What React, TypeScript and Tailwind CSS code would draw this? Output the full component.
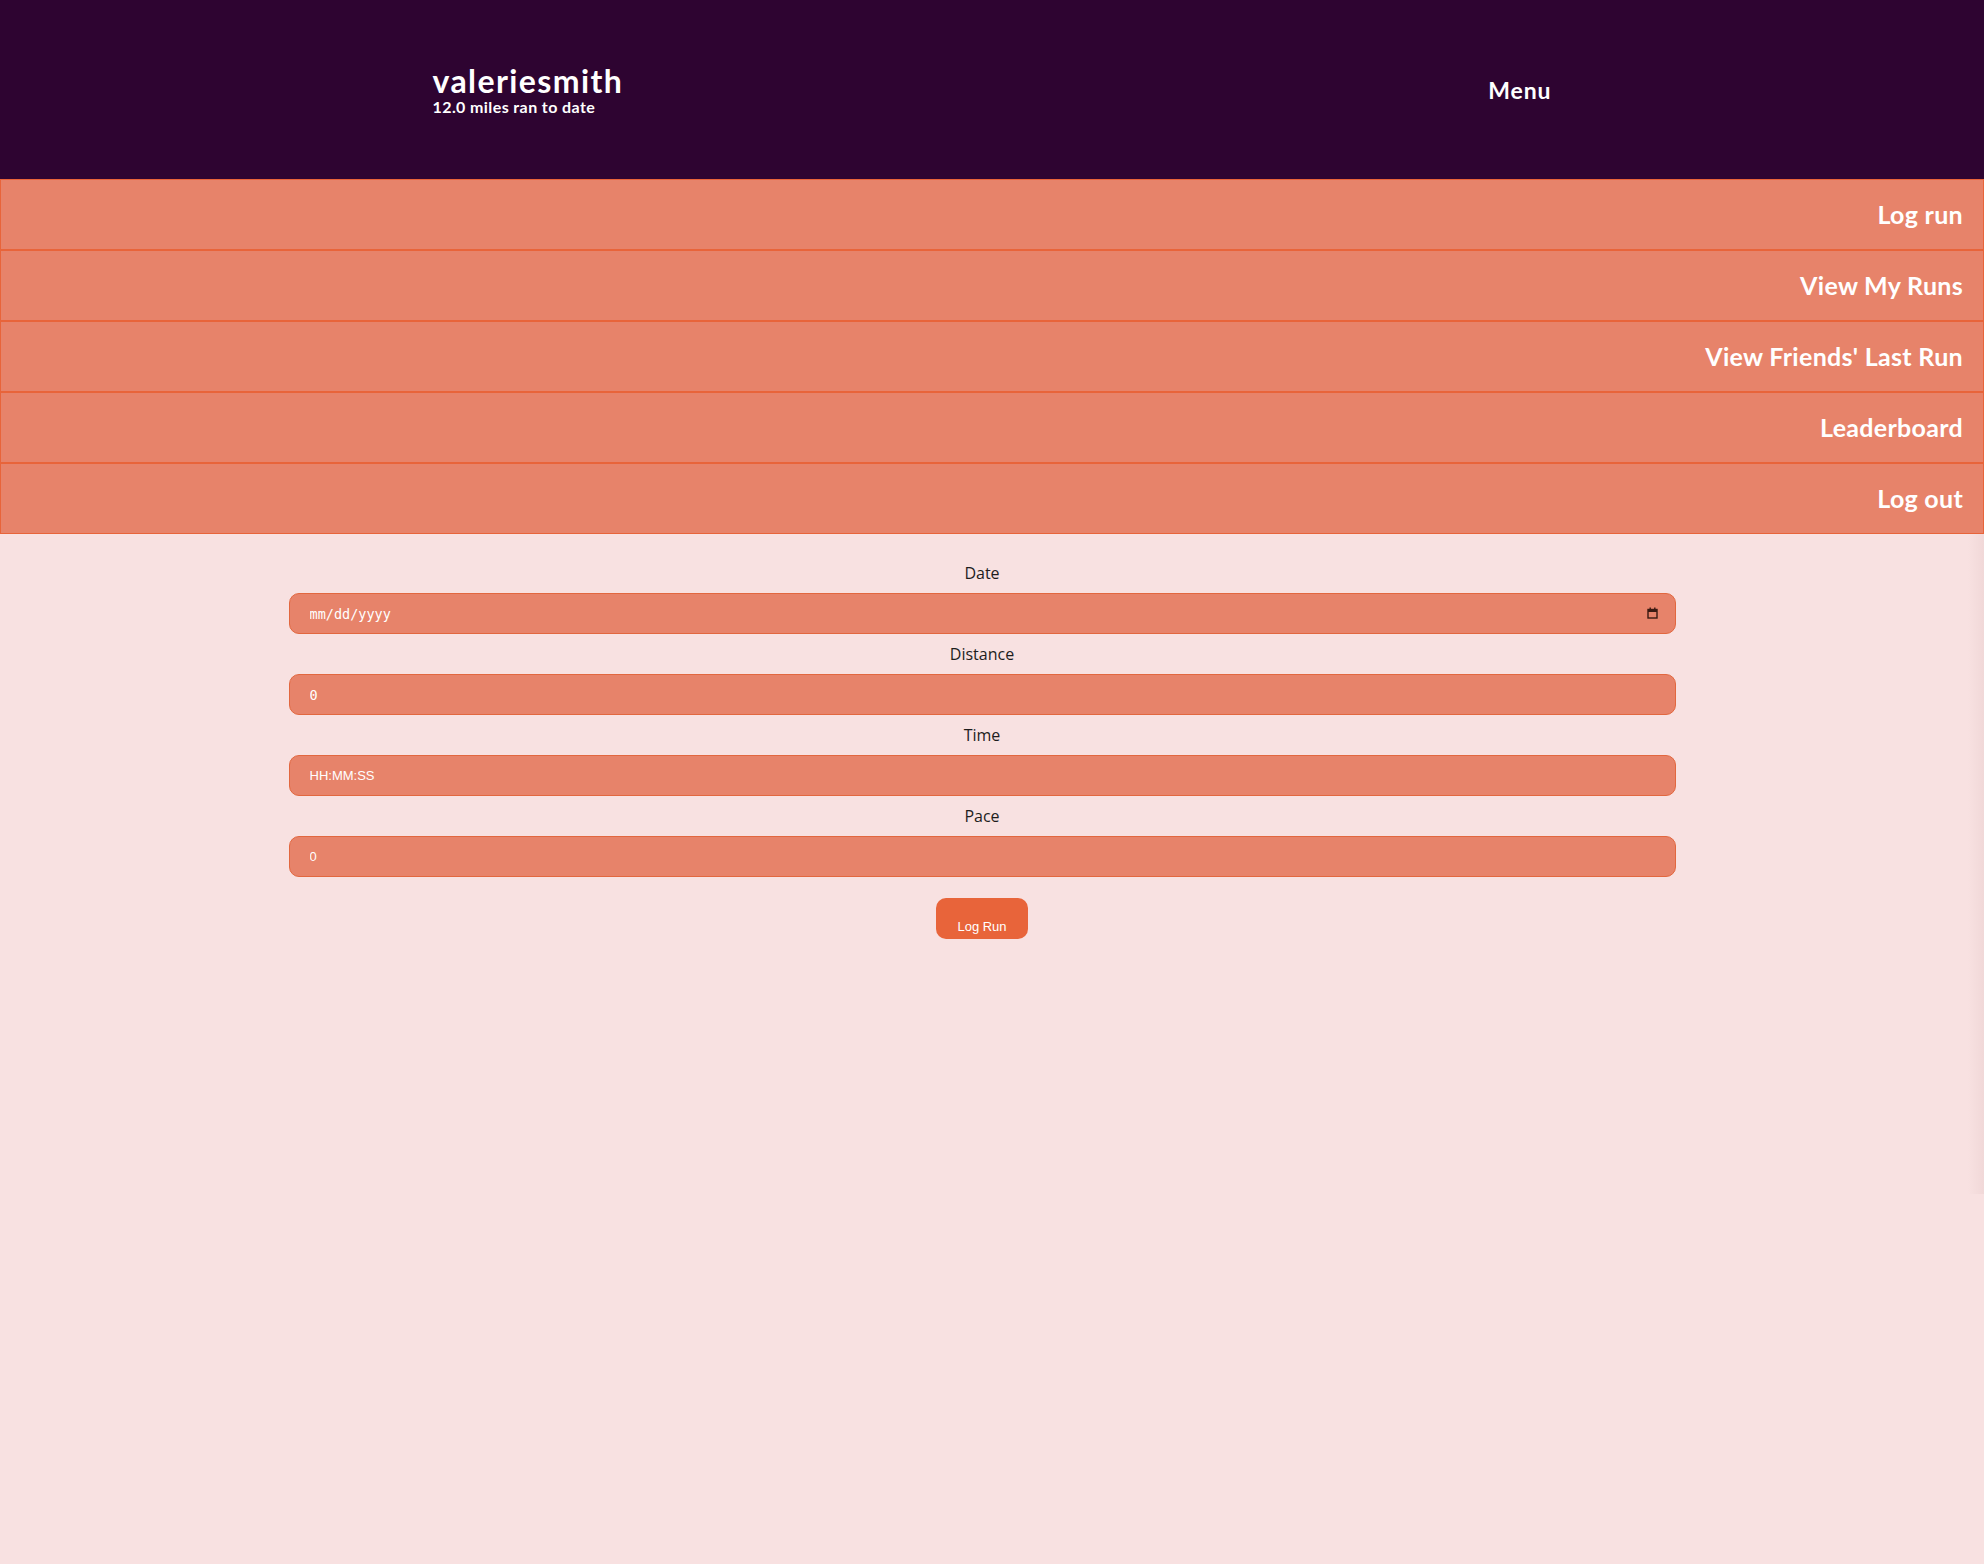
import React from "react";

const navItems = ["Log run", "View My Runs", "View Friends' Last Run", "Leaderboard", "Log out"];

function Field({ label, children }: { label: string; children: React.ReactNode }) {
  return (
    <div className="flex flex-col items-center">
      <div className="h-[20px] leading-[20px] text-[16px] text-[#1d1d1d] mt-[10px] mb-[10px]" style={{ fontFamily: '"Open Sans", "Liberation Sans", sans-serif' }}>
        {label}
      </div>
      {children}
    </div>
  );
}

const inputCls =
  "w-[1387px] h-[41px] rounded-[10px] border border-[#e2673f] bg-[#e7836a] pl-[20px] text-[13px] text-white placeholder:text-white placeholder:opacity-100 outline-none";

function CalendarIcon() {
  return (
    <svg width="11" height="12" viewBox="0 0 11 12" className="absolute right-[18px] top-[14px]">
      <rect x="1" y="2.5" width="9" height="8.5" fill="none" stroke="#3a1a12" strokeWidth="1.4" />
      <rect x="1" y="2.5" width="9" height="2.5" fill="#3a1a12" />
      <rect x="2.5" y="0.5" width="1.4" height="2.5" fill="#3a1a12" />
      <rect x="7.1" y="0.5" width="1.4" height="2.5" fill="#3a1a12" />
    </svg>
  );
}

export default function App() {
  return (
    <div className="relative min-h-[1564px] w-full bg-[#f8e1e1] overflow-hidden" style={{ fontFamily: 'Lato, "Open Sans", sans-serif' }}>
      <header className="h-[179px] bg-[#2e0431] flex items-center justify-around">
        <div className="flex flex-col text-white">
          <div className="text-[32px] font-bold leading-[34px] tracking-[1.4px]">valeriesmith</div>
          <div className="text-[16px] font-bold leading-[18px] tracking-[0.4px]">12.0 miles ran to date</div>
        </div>
        <div className="text-white text-[23px] font-bold tracking-[0.9px] pt-[2px]">Menu</div>
      </header>
      <nav className="flex flex-col">
        {navItems.map((item) => (
          <div
            key={item}
            className="h-[71px] border border-[#e8643a] bg-[#e7836a] flex items-center justify-end pr-[20px] text-white text-[25px] font-bold tracking-[0.3px]"
          >
            {item}
          </div>
        ))}
      </nav>
      <div className="relative flex flex-col items-center pr-[20px] pt-[19px]">
        <Field label="Date">
          <div className="relative">
            <input type="text" placeholder="mm/dd/yyyy" className={inputCls} style={{ fontFamily: '"DejaVu Sans Mono", monospace', fontSize: "13.5px" }} />
            <CalendarIcon />
          </div>
        </Field>
        <Field label="Distance">
          <input type="text" placeholder="0" className={inputCls} style={{ fontFamily: '"DejaVu Sans Mono", monospace', fontSize: "13.5px" }} />
        </Field>
        <Field label="Time">
          <input type="text" placeholder="HH:MM:SS" className={inputCls} style={{ fontFamily: '"Liberation Sans", Arial, sans-serif' }} />
        </Field>
        <Field label="Pace">
          <input type="text" placeholder="0" className={inputCls} style={{ fontFamily: '"Liberation Sans", Arial, sans-serif' }} />
        </Field>
        <button
          className="mt-[21px] w-[92px] h-[41px] rounded-[10px] bg-[#e8643a] text-white text-[13px] pt-[17px] leading-[18px]"
          style={{ fontFamily: '"Liberation Sans", Arial, sans-serif' }}
        >
          Log Run
        </button>
        <div className="absolute right-0 top-0 h-[660px] w-[16px] bg-gradient-to-l from-[#ecd2d2] to-transparent opacity-60" />
      </div>
    </div>
  );
}
